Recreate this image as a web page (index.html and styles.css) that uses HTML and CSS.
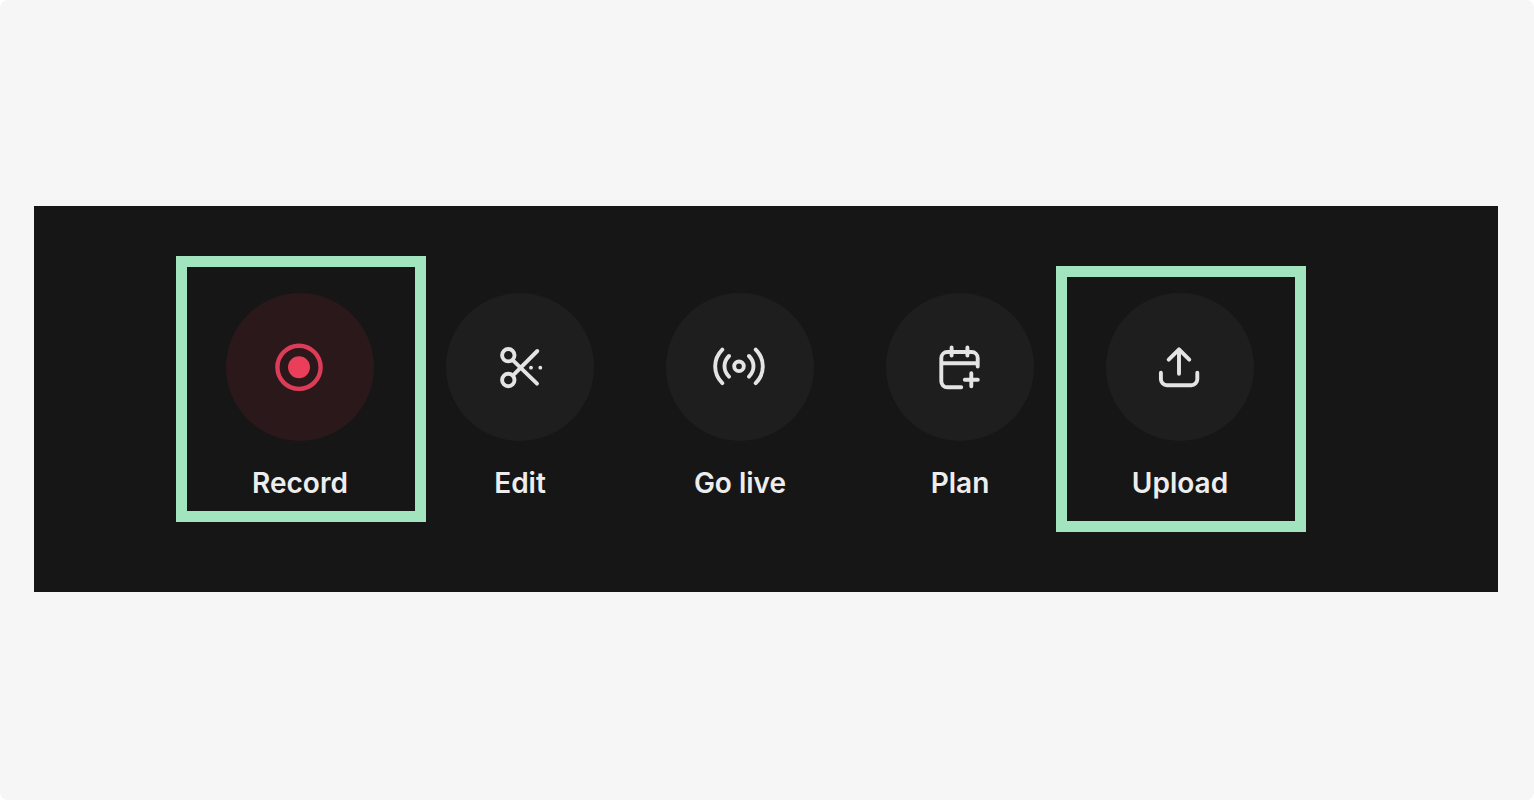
FILE: index.html
```html
<!DOCTYPE html>
<html lang="en">
<head>
<meta charset="utf-8">
<meta name="viewport" content="width=device-width, initial-scale=1">
<title>Create</title>
<link rel="stylesheet" href="styles.css">
</head>
<body>
<main class="stage">
  <nav class="panel" aria-label="Create">
    <button class="action action-record highlight highlight-high" type="button">
      <span class="disc">
        <svg class="icon" viewBox="0 0 80 80" aria-hidden="true">
          <circle cx="39" cy="40.3" r="21.6"/>
          <circle class="solid" cx="39" cy="40.3" r="11"/>
        </svg>
      </span>
      <span class="label">Record</span>
    </button>
    <button class="action" type="button">
      <span class="disc">
        <svg class="icon" viewBox="0 0 80 80" aria-hidden="true">
          <circle cx="28.3" cy="28.2" r="6.2"/>
          <circle cx="28.3" cy="53" r="6.2"/>
          <path d="M57.3 24 33 48.3M33 33.3 57 56.7"/>
          <circle class="solid" cx="51" cy="40.7" r="1.9"/>
          <circle class="solid" cx="60.3" cy="40.7" r="1.9"/>
        </svg>
      </span>
      <span class="label">Edit</span>
    </button>
    <button class="action" type="button">
      <span class="disc">
        <svg class="icon" viewBox="0 0 80 80" aria-hidden="true">
          <circle cx="39" cy="39.3" r="4.8"/>
          <path d="M29 29C23 35 23 43.600 29 49.600M49 29C55 35 55 43.600 49 49.600M22.300 22.600C12.800 32 12.800 46.600 22.300 56.200M55.700 22.600C65.200 32 65.200 46.600 55.700 56.200"/>
        </svg>
      </span>
      <span class="label">Go live</span>
    </button>
    <button class="action" type="button">
      <span class="disc">
        <svg class="icon" viewBox="0 0 80 80" aria-hidden="true">
          <path d="M41.200 60.300H27.300a6 6 0 0 1-6-6V31a6 6 0 0 1 6-6H51.700a6 6 0 0 1 6 6V39.500M21.300 36.300H57.700M31.600 20.500V28.500M47.400 20.500V28.500M51.300 46.200V59.200M44.800 52.700H57.800"/>
        </svg>
      </span>
      <span class="label">Plan</span>
    </button>
    <button class="action highlight" type="button">
      <span class="disc">
        <svg class="icon" viewBox="0 0 80 80" aria-hidden="true">
          <path d="M39 46.800V22.500M28.700 32.700 39 22.400 49.300 32.700M20.900 45.800V52.200a6 6 0 0 0 6 6H51.300a6 6 0 0 0 6-6V45.800"/>
        </svg>
      </span>
      <span class="label">Upload</span>
    </button>
  </nav>
</main>
</body>
</html>
```
FILE: styles.css
```css
*,
*::after {
  box-sizing: border-box;
}

body {
  margin: 0;
  background: #ffffff;
  font-family: Inter, "Liberation Sans", sans-serif;
}

.stage {
  display: flex;
  align-items: center;
  min-height: 100vh;
  padding: 32px 36px 34px 34px;
  border-radius: 8px;
  background: #f6f6f6;
}

.panel {
  display: flex;
  flex: 1;
  gap: 72px;
  padding: 87px 192px 91px;
  background: #161616;
}

.action {
  position: relative;
  display: flex;
  flex-direction: column;
  align-items: center;
  gap: 24px;
  width: 148px;
  padding: 0;
  border: 0;
  background: none;
  color: #ededed;
  font: inherit;
  cursor: pointer;
}

.disc {
  display: grid;
  place-items: center;
  width: 148px;
  height: 148px;
  border-radius: 50%;
  background: #1e1e1e;
}

.icon {
  width: 80px;
  height: 80px;
  fill: none;
  stroke: #e4e4e4;
  stroke-width: 3.9;
  stroke-linecap: round;
  stroke-linejoin: round;
}

.icon .solid {
  fill: #e4e4e4;
  stroke: none;
}

.action-record .disc {
  background: #2a181b;
}

.action-record .icon {
  stroke: #dc3c58;
  stroke-width: 4.4;
}

.action-record .icon .solid {
  fill: #ea3e5b;
}

.label {
  font-size: 28px;
  font-weight: 600;
  line-height: 36px;
  white-space: nowrap;
}

/* Callout frame drawn over the action */
.highlight::after {
  content: "";
  position: absolute;
  top: -27px;
  left: -50px;
  width: 250px;
  height: 266px;
  border: 11px solid #a2e4bd;
}

.highlight-high::after {
  top: -37px;
}
```
